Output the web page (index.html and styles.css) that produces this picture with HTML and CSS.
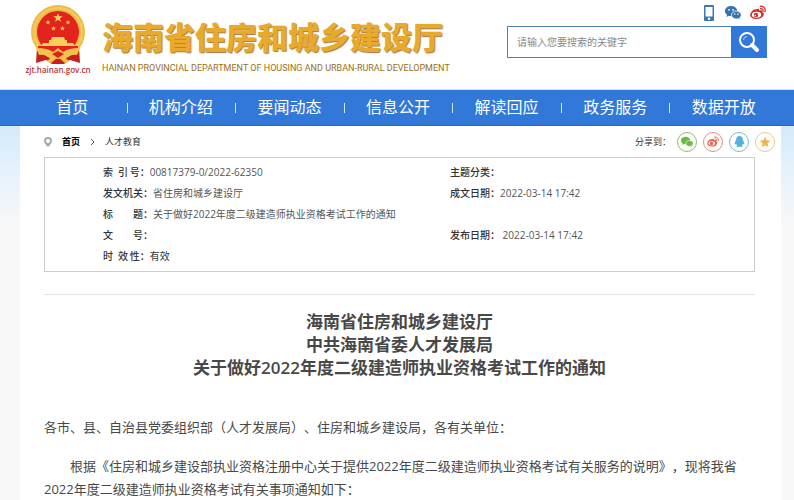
FILE: index.html
```html
<!DOCTYPE html>
<html lang="zh-CN">
<head>
  <meta charset="UTF-8">
  <meta name="viewport" content="width=device-width, initial-scale=1">
  <title>海南省住房和城乡建设厅</title>
  <link rel="stylesheet" href="styles.css">
</head>
<body>
  <header class="header">
    <div class="emblem">
      <svg viewBox="0 0 56 60" width="56" height="60" aria-hidden="true">
        <path d="M7 42 L6 58 L16 55 L22 59 L34 59 L40 55 L50 58 L49 42 Z" fill="#c8201c"/>
        <circle cx="28" cy="27" r="27" fill="#eebb45"/>
        <circle cx="28" cy="27" r="24" fill="none" stroke="#f4ca62" stroke-width="2"/>
        <circle cx="28" cy="27" r="21" fill="#e3231d"/>
        <path d="M28 8l1.200 3.200 3.400.1-2.700 2.100 1 3.300-2.900-1.900-2.900 1.900 1-3.300-2.700-2.100 3.400-.1z" fill="#fbd75e"/>
        <path d="M18 15l.7 1.600 1.800.1-1.400 1.100.5 1.800-1.600-1-1.600 1 .5-1.800-1.400-1.100 1.800-.1zM38 15l.7 1.600 1.800.1-1.400 1.100.5 1.800-1.600-1-1.600 1 .5-1.800-1.400-1.100 1.800-.1zM23.500 21l.7 1.600 1.800.1-1.400 1.100.5 1.800-1.600-1-1.600 1 .5-1.800-1.400-1.100 1.800-.1zM32.500 21l.7 1.600 1.800.1-1.400 1.100.5 1.800-1.600-1-1.600 1 .5-1.800-1.400-1.100 1.800-.1z" fill="#f6c64d"/>
        <path d="M22 32h12l1 3h2v3h6l2 3H11l2-3h6v-3h2z" fill="#f8cf58"/>
        <path d="M8 41h40v4H8z" fill="#e3231d"/>
        <path d="M6 43q12 0 17 4l5-4 5 4q5-4 17-4l-3 7q-8-1-11 4l4 2-5 2-7-6-7 6-5-2 4-2q-3-5-11-4z" fill="#f3c24c"/>
        <path d="M22 49l6-3 6 3-6 4z" fill="#d8241d"/>
      </svg>
      <span class="site-url">zjt.hainan.gov.cn</span>
    </div>
    <div class="brand">
      <h1>海南省住房和城乡建设厅</h1>
      <p>HAINAN PROVINCIAL DEPARTMENT OF HOUSING AND URBAN-RURAL DEVELOPMENT</p>
    </div>
    <div class="tools">
      <div class="social">
        <a href="#" aria-label="手机版">
          <svg viewBox="0 0 16 18" width="16" height="18"><rect x="3" y="1" width="10" height="16" rx="1" fill="#3f78ae"/><path d="M4.500 3h7v9.500h-7z" fill="#fff"/><circle cx="8" cy="14.800" r="1.200" fill="#fff"/></svg>
        </a>
        <a href="#" aria-label="微信">
          <svg viewBox="0 0 18 16" width="18" height="16"><path d="M7 1C3.500 1 1 3.200 1 6c0 1.600.8 2.900 2 3.800L2.500 12l2.400-1.300c.7.200 1.400.3 2.100.3 3.500 0 6.300-2.200 6.300-5S10.500 1 7 1z" fill="#3672b0"/><path d="M12.300 6C9.600 6 7.500 7.700 7.500 10s2.100 4 4.800 4c.6 0 1.200-.1 1.700-.3l2 1.100-.4-1.900c1-.7 1.700-1.700 1.700-2.900 0-2.300-2.200-4-5-4z" fill="#3672b0" stroke="#fff" stroke-width=".8"/><g fill="#fff"><circle cx="5" cy="4.800" r=".9"/><circle cx="9" cy="4.800" r=".9"/><circle cx="10.700" cy="9" r=".8"/><circle cx="14" cy="9" r=".8"/></g></svg>
        </a>
        <a href="#" aria-label="微博">
          <svg viewBox="0 0 18 16" width="18" height="16"><path d="M7 4.500C9 3 10.500 3.600 10 5.600c2-.8 3.800-.2 3.200 1.600 1.500.5 2 1.600 1.400 3C13.600 12.700 10.700 14 7.500 14 4 14 1.200 12.500 1.200 10 1.200 7.500 5 3.500 7 4.500z" fill="#cf3028"/><ellipse cx="7.500" cy="9.800" rx="4.700" ry="3" fill="#fff"/><circle cx="7" cy="10" r="2.200" fill="#cf3028"/><circle cx="6.300" cy="10.500" r=".8" fill="#fff"/><path d="M11.500 3.700c1.700-.2 2.900 1 2.500 2.700M11.300 1.300c3.400-.5 5.700 2.200 4.700 5.400" fill="none" stroke="#cf3028" stroke-width="1.300" stroke-linecap="round"/></svg>
        </a>
      </div>
      <form class="search">
        <input type="text" aria-label="搜索" placeholder="请输入您要搜索的关键字">
        <button type="button" aria-label="搜索">
          <svg viewBox="0 0 22 22" width="22" height="22"><circle cx="9" cy="9" r="7" fill="none" stroke="#fff" stroke-width="2"/><path d="M5.500 9A3.500 3.500 0 0 1 9 5.500" fill="none" stroke="#b8d4f5" stroke-width="1"/><path d="M14 14l5 5" stroke="#fff" stroke-width="4" stroke-linecap="round"/></svg>
        </button>
      </form>
    </div>
  </header>

  <nav class="nav">
    <a href="#">首页</a>
    <a href="#">机构介绍</a>
    <a href="#">要闻动态</a>
    <a href="#">信息公开</a>
    <a href="#">解读回应</a>
    <a href="#">政务服务</a>
    <a href="#">数据开放</a>
  </nav>

  <div class="page">
    <main class="content">
      <div class="bar">
        <div class="crumbs">
          <svg viewBox="0 0 8 10" width="8" height="10" aria-hidden="true"><path d="M4 0a4 4 0 0 0-4 4c0 2.500 4 6 4 6s4-3.500 4-6a4 4 0 0 0-4-4z" fill="#aaa"/><circle cx="4" cy="4" r="2" fill="#fff"/></svg>
          <a href="#" class="home">首页</a>
          <svg viewBox="0 0 5 8" width="5" height="8" aria-hidden="true"><path d="M1 1l3 3-3 3" fill="none" stroke="#555" stroke-width="1"/></svg>
          <a href="#">人才教育</a>
        </div>
        <div class="share">
          <span>分享到：</span>
          <a href="#" class="wechat" aria-label="微信">
            <svg viewBox="0 0 18 16" width="14" height="12"><path d="M7 1C3.500 1 1 3.200 1 6c0 1.600.8 2.900 2 3.800L2.500 12l2.400-1.300c.7.200 1.400.3 2.100.3 3.500 0 6.300-2.200 6.300-5S10.500 1 7 1z" fill="#6cb944"/><path d="M12.300 6C9.600 6 7.500 7.700 7.500 10s2.100 4 4.800 4c.6 0 1.200-.1 1.700-.3l2 1.100-.4-1.900c1-.7 1.700-1.700 1.700-2.900 0-2.300-2.200-4-5-4z" fill="#6cb944" stroke="#fff" stroke-width=".8"/></svg>
          </a>
          <a href="#" class="weibo" aria-label="微博">
            <svg viewBox="0 0 18 16" width="14" height="12"><path d="M7 4.500C9 3 10.500 3.600 10 5.600c2-.8 3.800-.2 3.200 1.600 1.500.5 2 1.600 1.400 3C13.600 12.700 10.700 14 7.500 14 4 14 1.200 12.500 1.200 10 1.200 7.500 5 3.500 7 4.500z" fill="#e8604c"/><ellipse cx="7.500" cy="9.800" rx="4.300" ry="2.700" fill="#fff"/><circle cx="7" cy="10" r="2.200" fill="#e8604c"/><path d="M11.500 3.700c1.700-.2 2.900 1 2.500 2.700M11.300 1.300c3.400-.5 5.700 2.200 4.700 5.400" fill="none" stroke="#e8604c" stroke-width="1.300" stroke-linecap="round"/></svg>
          </a>
          <a href="#" class="qq" aria-label="QQ">
            <svg viewBox="0 0 12 14" width="11" height="13"><path d="M6 1C3.500 1 2.200 2.800 2.300 5.500 1.200 7 .5 8.700.8 10.200c.4.500 1-.2 1.400-.9.200.9.600 1.500 1.200 2-.9.500-.9 1.500.2 1.600.9.100 1.900-.1 2.400-.5.500.4 1.500.6 2.400.5 1.100-.1 1.100-1.100.2-1.600.6-.5 1-1.100 1.200-2 .4.700 1 1.400 1.400.9.300-1.500-.4-3.200-1.500-4.700C9.800 2.800 8.500 1 6 1z" fill="#56b0df"/></svg>
          </a>
          <a href="#" class="qzone" aria-label="QQ空间">
            <svg viewBox="0 0 12 12" width="12" height="12"><path d="M6 .8l1.600 3.400 3.700.5-2.700 2.600.7 3.700L6 9.200 2.700 11l.7-3.700L.7 4.700l3.700-.5z" fill="#f3b54d"/></svg>
          </a>
        </div>
      </div>

      <dl class="meta">
        <div><dt>索&ensp;引&thinsp;号：</dt><dd>00817379-0/2022-62350</dd></div>
        <div><dt>主题分类：</dt><dd></dd></div>
        <div><dt>发文机关：</dt><dd>省住房和城乡建设厅</dd></div>
        <div><dt>成文日期：</dt><dd>2022-03-14 17:42</dd></div>
        <div class="wide"><dt>标&emsp;&emsp;题：</dt><dd>关于做好2022年度二级建造师执业资格考试工作的通知</dd></div>
        <div><dt>文&emsp;&emsp;号：</dt><dd></dd></div>
        <div><dt>发布日期：</dt><dd>&nbsp;2022-03-14 17:42</dd></div>
        <div class="dark"><dt>时&ensp;效&thinsp;性：</dt><dd>有效</dd></div>
      </dl>

      <article class="article">
        <h2>海南省住房和城乡建设厅<br>中共海南省委人才发展局<br>关于做好2022年度二级建造师执业资格考试工作的通知</h2>
        <p class="to">各市、县、自治县党委组织部（人才发展局）、住房和城乡建设局，各有关单位：</p>
        <p>根据《住房和城乡建设部执业资格注册中心关于提供2022年度二级建造师执业资格考试有关服务的说明》，现将我省2022年度二级建造师执业资格考试有关事项通知如下：</p>
      </article>
    </main>
  </div>
</body>
</html>
```

FILE: styles.css
```css
* {
  box-sizing: border-box;
}
body {
  margin: 0;
  background: #fff;
  color: #484848;
  font-family: "Open Sans", "Noto Sans CJK SC", sans-serif;
  text-spacing-trim: space-all;
}
a {
  color: inherit;
  text-decoration: none;
}
h1, h2, p, dl, dd {
  margin: 0;
}
svg {
  display: block;
}

/* header */
.header {
  display: flex;
  height: 90px;
  padding: 0 27px 0 26px;
  border-bottom: 1px solid #bdeaff;
}
.emblem {
  display: flex;
  flex-direction: column;
  align-items: center;
  width: 64px;
  padding-top: 5px;
}
.site-url {
  color: #b8323a;
  font-size: 8px;
  line-height: 10px;
  font-weight: 600;
}
.brand {
  margin-left: 12px;
  padding-top: 16px;
  white-space: nowrap;
}
.brand h1 {
  color: #e9a92c;
  font-size: 31px;
  line-height: 42px;
  font-weight: 900;
  text-shadow: 1px 1px 1px #9a7b45;
}
.brand p {
  color: #9a6f22;
  font-family: Roboto, sans-serif;
  font-size: 9px;
  line-height: 20px;
}
.tools {
  width: 260px;
  margin-left: auto;
}
.social {
  display: flex;
  align-items: center;
  justify-content: flex-end;
  gap: 7px;
  height: 26px;
}
.search {
  display: flex;
  height: 32px;
}
.search input {
  flex: 1;
  min-width: 0;
  padding: 0 9px;
  border: 1px solid #4d82b0;
  border-right: 0;
  background: #fff;
  font-family: inherit;
  font-size: 10px;
}
.search input::placeholder {
  color: #888;
}
.search button {
  display: flex;
  align-items: center;
  justify-content: center;
  width: 36px;
  padding: 0;
  border: 0;
  background: #3278d8;
  cursor: pointer;
}

/* main menu */
.nav {
  display: grid;
  grid-template-columns: repeat(7, 1fr);
  padding: 0 16px 0 18px;
  background: #3278d8;
  border-bottom: 1px solid #2b68b8;
}
.nav a {
  position: relative;
  color: #fff;
  font-size: 16px;
  line-height: 35px;
  text-align: center;
}
.nav a + a::before {
  content: "";
  position: absolute;
  left: 0;
  top: 13px;
  width: 1px;
  height: 10px;
  background: #d5e6fa;
}

/* page body */
.page {
  padding: 0 13px 0 20px;
  background: linear-gradient(#d3eafa, #e4f1fc 40px, #f8f8f8 100px);
}
.content {
  min-height: calc(100vh - 126px);
  padding: 0 26px 0 24px;
  background: #fff;
}
.bar {
  display: flex;
  justify-content: space-between;
  height: 31px;
  margin-right: -20px;
  color: #333;
  font-size: 9px;
}
.crumbs,
.share {
  display: flex;
  align-items: center;
}
.crumbs {
  gap: 10px;
}
.crumbs .home {
  color: #000;
  font-weight: 700;
}
.share {
  gap: 6px;
}
.share a {
  display: flex;
  align-items: center;
  justify-content: center;
  width: 20px;
  height: 20px;
  border: 1px solid #ccc;
  border-radius: 50%;
}
.share .wechat {
  border-color: #8dbb78;
}
.share .weibo {
  border-color: #dc9188;
}
.share .qq {
  border-color: #7bb9d4;
}
.share .qzone {
  border-color: #ecc987;
}

.meta {
  display: grid;
  grid-template-columns: 347px 1fr;
  padding: 4px 0 4px 58px;
  border: 1px solid #ccc;
  font-size: 10px;
  line-height: 21px;
}
.meta div {
  display: flex;
  min-height: 21px;
}
.meta .wide {
  grid-column: 1 / 3;
}
.meta dt {
  color: #333;
  font-weight: 500;
}
.meta dd {
  color: #555;
}
.meta .dark dd {
  color: #333;
}

/* article */
.article {
  margin-top: 22px;
  padding-top: 15px;
  border-top: 1px solid #e5e5e5;
  font-size: 13px;
  line-height: 23px;
}
.article h2 {
  margin-bottom: 37px;
  font-size: 17px;
  line-height: 23px;
  font-weight: 600;
  text-align: center;
}
.article p {
  text-indent: 2em;
}
.article .to {
  margin-bottom: 16px;
  text-indent: 0;
}
```
